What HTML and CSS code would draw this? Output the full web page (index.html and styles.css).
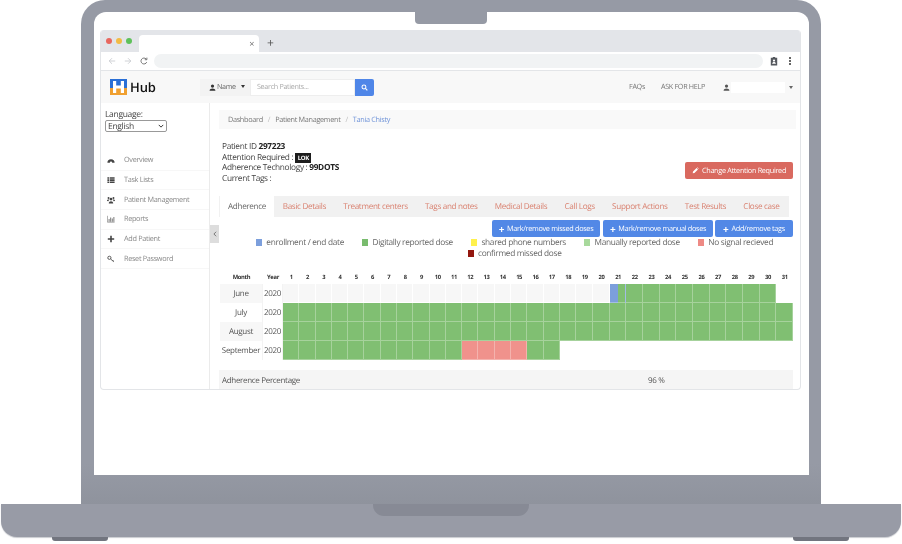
FILE: index.html
```html
<!DOCTYPE html>
<html lang="en">
    <head>
        <title>Hub - Patient Management</title>
        <meta charset="utf-8">
        <link rel="stylesheet" href="styles.css">
    </head>
    <body>
        <div class="laptop">
            <div class="lid">
                <div class="screen">
                    <div class="camera"></div>
                    <div class="browser">

                        <div class="tabstrip">
                            <span class="dot red"></span><span class="dot yellow"></span><span class="dot green"></span>
                            <div class="tab"><span class="tab-x">&times;</span></div>
                            <span class="tab-new">+</span>
                        </div>
                        <div class="toolbar">
                            <svg class="nav-ic" viewBox="0 0 10 10"><path d="M9 5H1.5M5 1.5L1.5 5 5 8.5" fill="none" stroke="#c4c7cc" stroke-width="1"/></svg>
                            <svg class="nav-ic" viewBox="0 0 10 10"><path d="M1 5h7.5M5 1.5L8.5 5 5 8.5" fill="none" stroke="#c4c7cc" stroke-width="1"/></svg>
                            <svg class="nav-ic" viewBox="0 0 10 10"><path d="M8.4 6.4A3.7 3.7 0 1 1 7.6 2.4M8.6 .8v2.6H6" fill="none" stroke="#555" stroke-width="1"/></svg>
                            <div class="omnibar"></div>
                            <svg class="prof-ic" viewBox="0 0 10 12"><path d="M1 2h8v9.500H1z" fill="#55585e"/><path d="M3.500 1h3v2h-3z" fill="#55585e"/><circle cx="5" cy="5.400" r="1.400" fill="#fff"/><path d="M2.700 9.500c0-3 4.600-3 4.600 0z" fill="#fff"/></svg>
                            <span class="kebab"><i></i><i></i><i></i></span>
                        </div>

                        <div class="topbar">
                            <svg class="logo" viewBox="0 0 17 16">
                                <rect width="17" height="9" fill="#2a6fd6"/>
                                <rect y="9" width="17" height="7" fill="#f0a030"/>
                                <path d="M3 2h3.200v4.500h4.600V2H14v12h-3.200V9.500H6.200V14H3z" fill="#fff"/>
                            </svg>
                            <span class="brand">Hub</span>
                            <div class="search">
                                <div class="search-type">
                                    <svg class="ic-s" viewBox="0 0 10 10"><circle cx="5" cy="3" r="2.300" fill="#333"/><path d="M.8 9.500c0-4.300 8.400-4.300 8.400 0z" fill="#333"/></svg>
                                    Name <span class="caret"></span>
                                </div>
                                <div class="search-input">Search Patients...</div>
                                <div class="search-btn">
                                    <svg class="ic-s" viewBox="0 0 10 10"><circle cx="4.200" cy="4.200" r="2.800" fill="none" stroke="#fff" stroke-width="1.500"/><path d="M6.300 6.300L9 9" stroke="#fff" stroke-width="1.700"/></svg>
                                </div>
                            </div>
                            <a class="top-link first">FAQs</a>
                            <a class="top-link">ASK FOR HELP</a>
                            <svg class="ic-s user-ic" viewBox="0 0 10 10"><circle cx="5" cy="3" r="2.300" fill="#555"/><path d="M.8 9.500c0-4.300 8.400-4.300 8.400 0z" fill="#555"/></svg>
                            <div class="user-box"></div>
                            <span class="caret small"></span>
                        </div>

                        <div class="app">
                            <div class="sidenav">
                                <div class="lang">
                                    <div class="lang-label">Language:</div>
                                    <div class="lang-select">English
                                        <svg viewBox="0 0 8 5"><path d="M1 1l3 3 3-3" fill="none" stroke="#333" stroke-width="1.300"/></svg>
                                    </div>
                                </div>
                                <a class="nav-item">
                                    <svg viewBox="0 0 10 10"><path d="M.5 8.500a4.500 4.500 0 1 1 9 0H6.500a1.500 1.500 0 0 0-3 0z" fill="#444"/></svg>Overview</a>
                                <a class="nav-item">
                                    <svg viewBox="0 0 10 10"><path d="M.5 1.500h2.200v2H.5zM3.500 1.500h6v2h-6zM.5 4.200h2.200v2H.5zM3.500 4.200h6v2h-6zM.5 6.900h2.200v2H.5zM3.500 6.900h6v2h-6z" fill="#444"/></svg>Task Lists</a>
                                <a class="nav-item">
                                    <svg viewBox="0 0 10 10"><circle cx="5" cy="3.800" r="1.700" fill="#444"/><circle cx="1.900" cy="2.600" r="1.200" fill="#444"/><circle cx="8.100" cy="2.600" r="1.200" fill="#444"/><path d="M2.200 9.300c0-3.500 5.600-3.500 5.600 0zM0 6.300c0-2 2-2.300 3-1.700-.8.500-1.200 1-1.300 1.900zM10 6.300c0-2-2-2.300-3-1.700.8.500 1.200 1 1.300 1.900z" fill="#444"/></svg>Patient Management</a>
                                <a class="nav-item">
                                    <svg viewBox="0 0 10 10"><path d="M.5 1v8h9" fill="none" stroke="#777" stroke-width=".8"/><path d="M2 5h1.200v3.500H2zM4 3h1.200v5.500H4zM6 4.500h1.200v4H6zM8 2.500h1.200v6H8z" fill="#777"/></svg>Reports</a>
                                <a class="nav-item">
                                    <svg viewBox="0 0 10 10"><path d="M4 1h2v3h3v2H6v3H4V6H1V4h3z" fill="#444"/></svg>Add Patient</a>
                                <a class="nav-item">
                                    <svg viewBox="0 0 10 10"><circle cx="3" cy="3.500" r="2" fill="none" stroke="#555" stroke-width="1.200"/><path d="M4.500 5l4 3.500M7 7.500l1-1" stroke="#555" stroke-width="1.200"/></svg>Reset Password</a>
                            </div>
                            <div class="collapse">
                                <svg viewBox="0 0 5 8"><path d="M4 1L1 4l3 3" fill="none" stroke="#555" stroke-width="1"/></svg>
                            </div>

                            <div class="content">
                                <div class="crumbs">
                                    <span>Dashboard</span><span class="sep">/</span><span>Patient Management</span><span class="sep">/</span><span class="crumb-on">Tania Chisty</span>
                                </div>

                                <div class="patient">
                                    <div class="patient-info">
                                        <div class="info-row">Patient ID <b>297223</b></div>
                                        <div class="info-row">Attention Required : <span class="badge">LOK</span></div>
                                        <div class="info-row">Adherence Technology : <b>99DOTS</b></div>
                                        <div class="info-row">Current Tags :</div>
                                    </div>
                                    <a class="btn btn-red">
                                        <svg class="ic-s" viewBox="0 0 10 10"><path d="M1 9l.5-2.500L6.500 1.500l2 2-5 5zM7.200 .8l.7-.3 1.600 1.600-.3.700z" fill="#fff"/></svg>
                                        Change Attention Required</a>
                                </div>

                                <div class="tabs">
                                    <a class="tab-link active">Adherence</a>
                                    <a class="tab-link">Basic Details</a>
                                    <a class="tab-link">Treatment centers</a>
                                    <a class="tab-link">Tags and notes</a>
                                    <a class="tab-link">Medical Details</a>
                                    <a class="tab-link">Call Logs</a>
                                    <a class="tab-link">Support Actions</a>
                                    <a class="tab-link">Test Results</a>
                                    <a class="tab-link">Close case</a>
                                </div>

                                <div class="actions">
                                    <a class="btn btn-blue"><b class="plus">+</b> Mark/remove missed doses</a>
                                    <a class="btn btn-blue"><b class="plus">+</b> Mark/remove manual doses</a>
                                    <a class="btn btn-blue"><b class="plus">+</b> Add/remove tags</a>
                                </div>

                                <div class="legend">
                                    <span class="key"><i class="k-blue"></i>enrollment / end date</span>
                                    <span class="key"><i class="k-green"></i>Digitally reported dose</span>
                                    <span class="key"><i class="k-yellow"></i>shared phone numbers</span>
                                    <span class="key"><i class="k-light"></i>Manually reported dose</span>
                                    <span class="key"><i class="k-pink"></i>No signal recieved</span>
                                    <span class="key"><i class="k-dark"></i>confirmed missed dose</span>
                                </div>

                                <div class="calendar">
                                    <div class="hd">Month</div><div class="hd">Year</div>
                                    <div class="hd">1</div><div class="hd">2</div><div class="hd">3</div><div class="hd">4</div><div class="hd">5</div><div class="hd">6</div><div class="hd">7</div><div class="hd">8</div><div class="hd">9</div><div class="hd">10</div><div class="hd">11</div><div class="hd">12</div><div class="hd">13</div><div class="hd">14</div><div class="hd">15</div><div class="hd">16</div><div class="hd">17</div><div class="hd">18</div><div class="hd">19</div><div class="hd">20</div><div class="hd">21</div><div class="hd">22</div><div class="hd">23</div><div class="hd">24</div><div class="hd">25</div><div class="hd">26</div><div class="hd">27</div><div class="hd">28</div><div class="hd">29</div><div class="hd">30</div><div class="hd">31</div>

                                    <div class="lbl alt">June</div><div class="lbl">2020</div>
                                    <div class="e"></div><div class="e"></div><div class="e"></div><div class="e"></div><div class="e"></div><div class="e"></div><div class="e"></div><div class="e"></div><div class="e"></div><div class="e"></div>
                                    <div class="e"></div><div class="e"></div><div class="e"></div><div class="e"></div><div class="e"></div><div class="e"></div><div class="e"></div><div class="e"></div><div class="e"></div><div class="e"></div>
                                    <div class="g start"></div><div class="g"></div><div class="g"></div><div class="g"></div><div class="g"></div><div class="g"></div><div class="g"></div><div class="g"></div><div class="g"></div><div class="g"></div><div></div>

                                    <div class="lbl">July</div><div class="lbl">2020</div>
                                    <div class="g"></div><div class="g"></div><div class="g"></div><div class="g"></div><div class="g"></div><div class="g"></div><div class="g"></div><div class="g"></div><div class="g"></div><div class="g"></div>
                                    <div class="g"></div><div class="g"></div><div class="g"></div><div class="g"></div><div class="g"></div><div class="g"></div><div class="g"></div><div class="g"></div><div class="g"></div><div class="g"></div>
                                    <div class="g"></div><div class="g"></div><div class="g"></div><div class="g"></div><div class="g"></div><div class="g"></div><div class="g"></div><div class="g"></div><div class="g"></div><div class="g"></div><div class="g"></div>

                                    <div class="lbl alt">August</div><div class="lbl">2020</div>
                                    <div class="g"></div><div class="g"></div><div class="g"></div><div class="g"></div><div class="g"></div><div class="g"></div><div class="g"></div><div class="g"></div><div class="g"></div><div class="g"></div>
                                    <div class="g"></div><div class="g"></div><div class="g"></div><div class="g"></div><div class="g"></div><div class="g"></div><div class="g"></div><div class="g"></div><div class="g"></div><div class="g"></div>
                                    <div class="g"></div><div class="g"></div><div class="g"></div><div class="g"></div><div class="g"></div><div class="g"></div><div class="g"></div><div class="g"></div><div class="g"></div><div class="g"></div><div class="g"></div>

                                    <div class="lbl">September</div><div class="lbl">2020</div>
                                    <div class="g"></div><div class="g"></div><div class="g"></div><div class="g"></div><div class="g"></div><div class="g"></div><div class="g"></div><div class="g"></div><div class="g"></div><div class="g"></div>
                                    <div class="g"></div><div class="r"></div><div class="r"></div><div class="r"></div><div class="r"></div><div class="g"></div><div class="g"></div>
                                </div>

                                <div class="percent">
                                    <span class="percent-label">Adherence Percentage</span>
                                    <span>96 %</span>
                                </div>
                            </div>
                        </div>
                    </div>
                </div>
            </div>
            <div class="base"><div class="base-notch"></div></div>
            <div class="feet"><div class="foot"></div><div class="foot"></div></div>
        </div>
    </body>
</html>
```

FILE: styles.css
```css
* {
    box-sizing: border-box;
}
body {
    margin: 0;
    background-color: #fff;
    font-family: "Open Sans", Arial, sans-serif;
    text-rendering: geometricPrecision;
    letter-spacing: -0.02em;
    overflow: hidden;
}
.laptop {
    width: 902px;
    height: 544px;
}
/* Laptop shell */
.lid {
    margin: 0 81px;
    height: 504px;
    padding: 12px 12px 29px 13px;
    border-radius: 24px 24px 0 0;
    background: linear-gradient(#969aa5, #969aa5 92%, #8f939d);
}
.screen {
    position: relative;
    height: 463px;
    padding: 18px 8px 0 6px;
    border-radius: 12px 12px 0 0;
    background-color: #fff;
}
.camera {
    position: absolute;
    top: 0;
    left: 321px;
    width: 72px;
    height: 12px;
    border-radius: 0 0 4px 4px;
    background-color: #969aa5;
}
.base {
    display: flex;
    justify-content: center;
    margin: 0 1px 0 1px;
    height: 33px;
    border-radius: 0 0 16px 16px;
    background-color: #989ba6;
    box-shadow: 0 1px 1px #c9cbd0;
}
.base-notch {
    width: 156px;
    height: 12px;
    border-radius: 0 0 11px 11px;
    background-color: #878a95;
}
.feet {
    display: flex;
    justify-content: space-between;
    padding: 0 53px 0 52px;
}
.foot {
    width: 56px;
    height: 4px;
    border-radius: 0 0 3px 3px;
    background-color: #72757f;
}
/* Browser window */
.browser {
    height: 360px;
    overflow: hidden;
    border: 1px solid #e3e5e8;
    border-top: none;
    border-radius: 4px;
    filter: blur(0.35px);
}
.tabstrip {
    display: flex;
    align-items: flex-end;
    height: 22px;
    padding-left: 5px;
    background-color: #e3e5e9;
}
.dot {
    width: 6px;
    height: 6px;
    margin: 0 4px 8px 0;
    border-radius: 50%;
}
.red { background-color: #e8675f; }
.yellow { background-color: #f2bb45; }
.green { background-color: #5ec15a; }
.tab {
    display: flex;
    align-items: center;
    justify-content: flex-end;
    width: 120px;
    height: 17px;
    margin-left: 3px;
    padding-right: 5px;
    border-radius: 4px 4px 0 0;
    background-color: #fff;
}
.tab-x {
    font-size: 9px;
    color: #666;
}
.tab-new {
    margin: 0 0 2px 8px;
    font-size: 12px;
    line-height: 14px;
    color: #555;
}
.toolbar {
    display: flex;
    align-items: center;
    height: 19px;
    padding-left: 7px;
    border-bottom: 1px solid #e3e5e8;
}
.nav-ic {
    width: 8px;
    height: 8px;
    margin-right: 8px;
}
.omnibar {
    width: 609px;
    height: 14px;
    margin-left: -2px;
    border-radius: 7px;
    background-color: #f1f3f4;
}
.prof-ic {
    width: 8px;
    height: 10px;
    margin-left: 7px;
}
.kebab {
    display: flex;
    flex-direction: column;
    gap: 1.500px;
    margin-left: 11px;
}
.kebab i {
    width: 1.500px;
    height: 1.500px;
    background-color: #666;
}
/* App header */
.topbar {
    display: flex;
    align-items: center;
    height: 32px;
    padding-left: 9px;
    background-color: #f8f8f8;
}
.logo {
    width: 17px;
    height: 16px;
}
.brand {
    width: 70px;
    margin-left: 3px;
    font-size: 13px;
    font-weight: 600;
    letter-spacing: -0.1px;
    color: #111;
}
.search {
    display: flex;
    height: 17px;
    font-size: 7.200px;
}
.search-type {
    display: flex;
    align-items: center;
    gap: 1px;
    width: 50px;
    padding-left: 9px;
    background-color: #f3f3f3;
    color: #666;
}
.ic-s {
    width: 7px;
    height: 7px;
}
.caret {
    display: inline-block;
    margin: -2px 0 0 4px;
    border-top: 3px solid #333;
    border-left: 2.500px solid transparent;
    border-right: 2.500px solid transparent;
}
.caret.small {
    margin: 0 0 0 4px;
    border-top-color: #666;
}
.search-input {
    display: flex;
    align-items: center;
    width: 105px;
    padding-left: 6px;
    border: 1px solid #eee;
    background-color: #fff;
    color: #aaa;
}
.search-btn {
    display: flex;
    align-items: center;
    justify-content: center;
    width: 19px;
    border-radius: 0 2px 2px 0;
    background-color: #4f86e8;
}
.top-link {
    margin-left: 16px;
    font-size: 7.200px;
    color: #777;
}
.top-link.first {
    margin-left: 255px;
}
.user-ic {
    margin-left: 18px;
}
.user-box {
    width: 54px;
    height: 11px;
    margin-left: 1px;
    background-color: #fff;
}
/* Page below the header */
.app {
    position: relative;
    display: flex;
}
.sidenav {
    flex: none;
    width: 109px;
    height: 288px;
    border-right: 1px solid #ebebeb;
}
.lang {
    height: 48px;
    padding: 7px 0 0 4px;
    font-size: 8.500px;
    color: #444;
}
.lang-label {
    line-height: 10px;
}
.lang-select {
    display: flex;
    align-items: center;
    justify-content: space-between;
    width: 62px;
    height: 12px;
    padding: 0 2px;
    border: 1px solid #999;
    border-radius: 2px;
    color: #444;
}
.lang-select svg {
    width: 6px;
    height: 4px;
}
.nav-item {
    display: flex;
    align-items: center;
    height: 19.700px;
    padding-left: 6px;
    border-bottom: 1px solid #f7f7f7;
    font-size: 7.300px;
    color: #888;
}
.nav-item svg {
    width: 8px;
    height: 8px;
    margin-right: 9px;
}
.collapse {
    position: absolute;
    top: 122px;
    left: 109px;
    display: flex;
    align-items: center;
    justify-content: center;
    width: 9px;
    height: 18px;
    background-color: #ddd;
}
.collapse svg {
    width: 4px;
    height: 6px;
}
.content {
    flex: 1;
    min-width: 0;
    padding: 7px 4px 0 9px;
    color: #444;
}
.crumbs {
    display: flex;
    align-items: center;
    height: 19px;
    padding-left: 9px;
    background-color: #f9f9f9;
    font-size: 7.300px;
    color: #777;
}
.sep {
    margin: 0 5px;
    color: #bbb;
}
.crumb-on {
    color: #6f93d8;
}
.patient {
    display: flex;
    align-items: flex-end;
    justify-content: space-between;
    margin-top: 13px;
    padding: 0 3px;
    font-size: 8.300px;
}
.info-row {
    height: 10.500px;
    line-height: 10.500px;
}
.patient b {
    color: #222;
}
.badge {
    display: inline-block;
    height: 10px;
    padding: 0 2.500px;
    background-color: #1d1d1d;
    color: #fff;
    font-size: 6px;
    font-weight: 700;
    line-height: 10px;
    vertical-align: top;
}
.btn {
    display: flex;
    align-items: center;
    justify-content: center;
    gap: 3px;
    height: 17px;
    border-radius: 2px;
    color: #fff;
    font-size: 7.300px;
    white-space: nowrap;
}
.btn-red {
    width: 108px;
    margin-bottom: 5px;
    background-color: #d9695f;
}
.tabs {
    display: flex;
    height: 21px;
    margin: 12px 7px 0 0;
    padding-left: 1px;
    background-color: #f1f1f1;
}
.tab-link {
    padding: 0 8.600px;
    font-size: 8.150px;
    line-height: 22px;
    white-space: nowrap;
    color: #d9806f;
}
.tab-link.active {
    padding: 0 8px;
    background-color: #fff;
    color: #666;
}
.actions {
    display: flex;
    justify-content: flex-end;
    gap: 2px;
    margin-top: 3px;
    padding-right: 3px;
}
.btn-blue {
    background-color: #5288e6;
}
.btn-blue:nth-child(1) { width: 108px; margin-right: 1px; }
.btn-blue:nth-child(2) { width: 110px; }
.btn-blue:nth-child(3) { width: 78px; }
.plus {
    font-size: 10px;
    line-height: 10px;
}
.legend {
    display: flex;
    flex-wrap: wrap;
    justify-content: center;
    gap: 0 18px;
    width: 577px;
    height: 22px;
    padding-left: 14px;
    font-size: 8.300px;
    line-height: 11px;
    color: #666;
}
.key {
    display: flex;
    align-items: center;
    gap: 4px;
    height: 11px;
}
.key i {
    width: 6.500px;
    height: 6.500px;
}
.k-blue { background-color: #7c9fdc; }
.k-green { background-color: #79bc6e; }
.k-yellow { background-color: #fff14d; }
.k-light { background-color: #a8d99c; }
.k-pink { background-color: #ee8a85; }
.k-dark { background-color: #93170e; }
/* Adherence calendar */
.calendar {
    display: grid;
    grid-template-columns: 43px 20px repeat(17, 16.3fr) repeat(14, 16.67fr);
    grid-auto-rows: 19px;
    width: 573px;
    margin: 6px 0 0 1px;
}
.hd {
    height: 12px;
    margin-top: 6px;
    font-size: 5.800px;
    font-weight: 700;
    line-height: 12px;
    text-align: center;
    color: #333;
}
.lbl {
    font-size: 8px;
    line-height: 19px;
    text-align: center;
    color: #555;
    border-right: 1px solid #f3f3f3;
}
.alt {
    background-color: #f7f7f7;
}
.e, .g, .r {
    border-right: 1px solid rgba(255, 255, 255, 0.3);
    border-bottom: 1px solid rgba(255, 255, 255, 0.3);
}
.e {
    background-color: #f7f7f7;
    border-color: #fff;
}
.g {
    background-color: #80bf72;
}
.r {
    background-color: #f0928c;
}
.start {
    background: linear-gradient(90deg, #7c9fdc 8px, #80bf72 8px);
}
.percent {
    display: flex;
    width: 574px;
    height: 20px;
    margin-top: 10px;
    padding-left: 3px;
    background-color: #f5f5f5;
    font-size: 8px;
    line-height: 21px;
    color: #555;
}
.percent-label {
    width: 426px;
}
```
